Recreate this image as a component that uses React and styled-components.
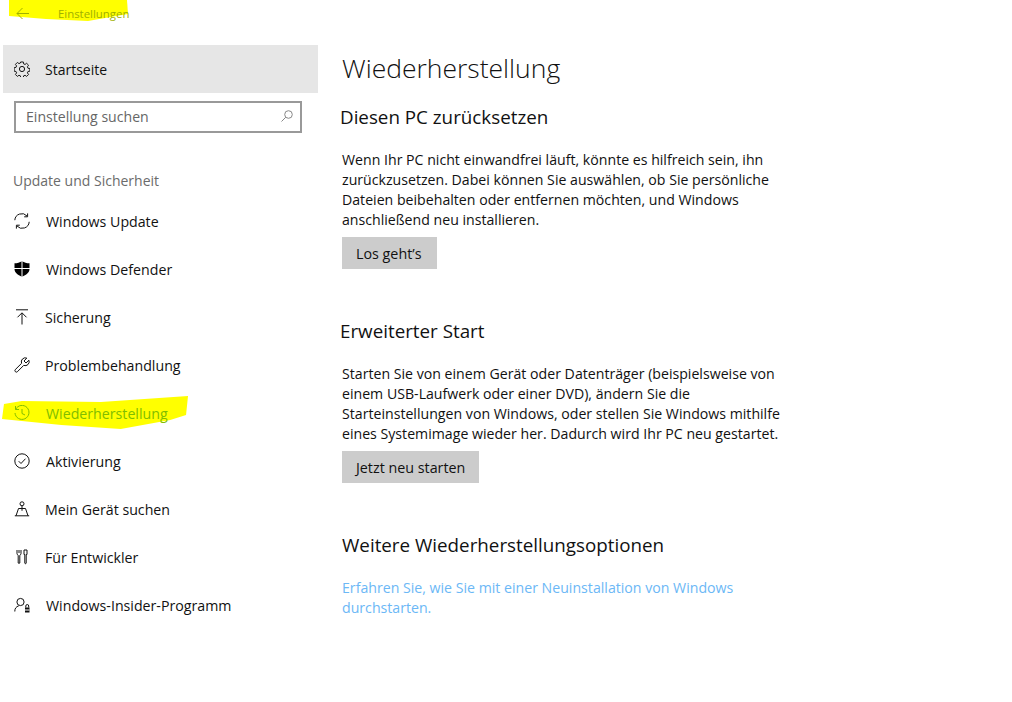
import React from "react";
import styled, { createGlobalStyle } from "styled-components";

const GlobalStyle = createGlobalStyle`
  html, body { margin: 0; padding: 0; background: #fff; }
  body { font-family: "Open Sans", "Noto Sans", "Liberation Sans", sans-serif; color: #000; }
`;

const Icon = ({ children, color }) => (
  <IconSvg viewBox="0 0 16 16" fill="none" stroke={color || "#111"} strokeWidth="1">
    {children}
  </IconSvg>
);

const GearIcon = () => (
  <Icon>
    <circle cx="8" cy="8" r="2.6" />
    <path d="M6.6.6h2.800l.3 2 1.500.6 1.700-1.200 2 2-1.200 1.700.6 1.500 2 .3v2.800l-2 .3-.6 1.500 1.200 1.700-2 2-1.700-1.200-1.500.6-.3 2H6.600l-.3-2-1.500-.6-1.700 1.200-2-2 1.200-1.700-.6-1.500-2-.3V6.600l2-.3.6-1.500L1.100 3.100l2-2 1.700 1.200 1.500-.6z" transform="translate(.4 .4) scale(.95)" />
  </Icon>
);

const UpdateIcon = () => (
  <Icon>
    <path d="M.8 7.200A7 7 0 0 1 13 3" />
    <path d="M13.600.4v3.400h-3.400" />
    <path d="M15.200 8.800A7 7 0 0 1 3 13" />
    <path d="M2.400 15.600v-3.400h3.400" />
  </Icon>
);

const ShieldIcon = () => (
  <IconSvg viewBox="0 0 16 16">
    <path fill="#000" d="M8 .2c2.200 1.300 4.700 2 7.500 2.100V8c0 3.500-3.200 6.100-7.500 7.800C3.700 14.100.5 11.500.5 8V2.300C3.300 2.200 5.800 1.500 8 .2z" />
    <path stroke="#fff" strokeWidth="1" d="M8 0v16M0 7.500h16" />
  </IconSvg>
);

const BackupIcon = () => (
  <Icon>
    <path d="M2 .8h12" />
    <path d="M8 15.500V4" />
    <path d="M3.500 8.300 8 3.800l4.500 4.500" />
  </Icon>
);

const WrenchIcon = () => (
  <Icon>
    <path d="M14.900 3.200 12 6 10 4l2.800-2.900A4 4 0 0 0 7.600 6.300L1.200 12.700a1.500 1.500 0 0 0 2.100 2.100l6.400-6.400a4 4 0 0 0 5.200-5.200z" />
  </Icon>
);

const HistoryIcon = ({ color }) => (
  <Icon color={color}>
    <path d="M1.700 4.300A7 7 0 1 1 1 8" />
    <path d="M1.500 1v3.500H5" />
    <path d="M8 4v4.500l3 1.500" />
  </Icon>
);

const CheckIcon = () => (
  <Icon>
    <circle cx="8" cy="8" r="7.200" />
    <path d="M4.700 8.200 7 10.500l4.500-4.800" />
  </Icon>
);

const FindIcon = () => (
  <Icon>
    <circle cx="8" cy="2.800" r="2" />
    <path d="M8 4.800v5" />
    <path d="M0.800 14.800h14.400M2 14.800 4.500 7.500h7l2.500 7.300" />
  </Icon>
);

const DevIcon = () => (
  <Icon>
    <path d="M3 1v3.500c0 1 .6 1.500 1.200 1.800V14a1 1 0 0 0 1.600 0V6.300C6.400 6 7 5.500 7 4.500V1" />
    <path d="M5 1v3" />
    <path d="M10 1h3v4.500h-.8V14a.7.7 0 0 1-1.400 0V5.500H10z" />
  </Icon>
);

const InsiderIcon = () => (
  <Icon>
    <circle cx="6.500" cy="5" r="3.600" />
    <path d="M.8 14.500a5.800 5.800 0 0 1 4-5.700" />
    <path fill="#111" stroke="none" d="M11 10.500h4.500V15.500H11z" />
    <path d="M11.800 10.500V9a1.400 1.400 0 0 1 2.900 0v1.500" />
    <path stroke="#fff" d="M11 13h4.500" />
  </Icon>
);

const NAV_ITEMS = [
  { label: "Windows Update", Glyph: UpdateIcon, offset: 1 },
  { label: "Windows Defender", Glyph: ShieldIcon, offset: 1 },
  { label: "Sicherung", Glyph: BackupIcon },
  { label: "Problembehandlung", Glyph: WrenchIcon },
  { label: "Wiederherstellung", Glyph: HistoryIcon, marked: true, offset: 1 },
  { label: "Aktivierung", Glyph: CheckIcon, offset: 1 },
  { label: "Mein Gerät suchen", Glyph: FindIcon },
  { label: "Für Entwickler", Glyph: DevIcon },
  { label: "Windows-Insider-Programm", Glyph: InsiderIcon, offset: 1 },
];

export default function App() {
  return (
    <Page>
      <GlobalStyle />
      <Sidebar>
        <TitleBar>
          <Marker viewBox="0 0 122 22" $left={3} $top={0} $width={122} $height={22}>
            <path fill="#ffff00" d="M3 0H121L122 14 82 21 40 19 3 16z" />
          </Marker>
          <BackLink>
            <IconSvg $size={13} viewBox="0 0 13 13" fill="none" stroke="#a0b000">
              <path d="M13 6.500H1M6.500 1 1 6.500 6.500 12" />
            </IconSvg>
          </BackLink>
          <AppName>Einstellungen</AppName>
        </TitleBar>
        <HomeRow>
          <GearIcon />
          <HomeLabel>Startseite</HomeLabel>
        </HomeRow>
        <SearchBox>
          <SearchText>Einstellung suchen</SearchText>
          <IconSvg $size={12} viewBox="0 0 12 12" fill="none" stroke="#888">
            <circle cx="7.500" cy="4.500" r="3.800" />
            <path d="M4.800 7.200 .5 11.500" />
          </IconSvg>
        </SearchBox>
        <GroupLabel>Update und Sicherheit</GroupLabel>
        <NavList>
          {NAV_ITEMS.map(({ label, Glyph, marked, offset }) => (
            <NavRow key={label}>
              {marked && (
                <Marker viewBox="0 0 190 33" $left={-1} $top={7} $width={188} $height={33}>
                  <path fill="#ffff00" d="M2 8 20 5 100 6 188 0 186 19 170 24 120 33 60 29 0 23z" />
                </Marker>
              )}
              <Glyph color={marked ? "#80bd00" : undefined} />
              <NavLabel $marked={marked} $offset={offset}>{label}</NavLabel>
            </NavRow>
          ))}
        </NavList>
      </Sidebar>
      <Main>
        <PageTitle>Wiederherstellung</PageTitle>
        <Section>
          <SectionTitle $shift={-2}>Diesen PC zurücksetzen</SectionTitle>
          <Body>
            Wenn Ihr PC nicht einwandfrei läuft, könnte es hilfreich sein, ihn<br />
            zurückzusetzen. Dabei können Sie auswählen, ob Sie persönliche<br />
            Dateien beibehalten oder entfernen möchten, und Windows<br />
            anschließend neu installieren.
          </Body>
          <ActionButton>Los geht’s</ActionButton>
        </Section>
        <Section>
          <SectionTitle $shift={-2}>Erweiterter Start</SectionTitle>
          <Body>
            Starten Sie von einem Gerät oder Datenträger (beispielsweise von<br />
            einem USB-Laufwerk oder einer DVD), ändern Sie die<br />
            Starteinstellungen von Windows, oder stellen Sie Windows mithilfe<br />
            eines Systemimage wieder her. Dadurch wird Ihr PC neu gestartet.
          </Body>
          <ActionButton>Jetzt neu starten</ActionButton>
        </Section>
        <Section>
          <SectionTitle>Weitere Wiederherstellungsoptionen</SectionTitle>
          <LinkText>
            Erfahren Sie, wie Sie mit einer Neuinstallation von Windows<br />
            durchstarten.
          </LinkText>
        </Section>
      </Main>
    </Page>
  );
}

const Page = styled.div`
  display: flex;
  width: 1012px;
  height: 702px;
  overflow: hidden;
  background: #fff;
`;

const Sidebar = styled.aside`
  width: 318px;
  padding-left: 3px;
  box-sizing: border-box;
  flex: none;
`;

const TitleBar = styled.div`
  position: relative;
  display: flex;
  align-items: center;
  height: 26px;
  margin-bottom: 19px;
`;

const Marker = styled.svg.attrs({ preserveAspectRatio: "none" })`
  position: absolute;
  left: ${(p) => p.$left}px;
  top: ${(p) => p.$top}px;
  width: ${(p) => p.$width}px;
  height: ${(p) => p.$height}px;
  z-index: 0;
`;

const IconSvg = styled.svg`
  position: relative;
  z-index: 1;
  width: ${(p) => p.$size || 16}px;
  height: ${(p) => p.$size || 16}px;
  flex: none;
`;

const BackLink = styled.div`
  position: relative;
  display: flex;
  width: 55px;
  padding-left: 13px;
  box-sizing: border-box;
`;

const AppName = styled.span`
  position: relative;
  font-size: 11.400px;
  color: #a0b000;
`;

const HomeRow = styled.div`
  display: flex;
  align-items: center;
  height: 48px;
  padding-left: 11px;
  background: #e6e6e6;
`;

const HomeLabel = styled.span`
  margin-left: 15px;
  font-size: 14px;
  color: #111;
`;

const SearchBox = styled.div`
  display: flex;
  align-items: center;
  justify-content: space-between;
  box-sizing: border-box;
  width: 288px;
  height: 32px;
  margin: 8px 0 0 11px;
  padding: 0 7px 2px 10px;
  border: 2px solid #999;
`;

const SearchText = styled.span`
  font-size: 14.100px;
  color: #666;
`;

const GroupLabel = styled.div`
  margin: 37px 0 0 10px;
  height: 22px;
  line-height: 22px;
  font-size: 14px;
  color: #6b6b6b;
`;

const NavList = styled.nav`
  display: flex;
  flex-direction: column;
  margin-top: 5px;
`;

const NavRow = styled.div`
  position: relative;
  display: flex;
  align-items: center;
  height: 48px;
  padding-left: 11px;
`;

const NavLabel = styled.span`
  position: relative;
  z-index: 1;
  margin-left: ${(p) => 15 + (p.$offset || 0)}px;
  font-size: 14.200px;
  color: ${(p) => (p.$marked ? "#80bd00" : "#111")};
`;

const Main = styled.main`
  flex: 1;
  padding: 49px 0 0 24px;
`;

const PageTitle = styled.h1`
  margin: 0;
  height: 40px;
  line-height: 38px;
  font-size: 26.500px;
  font-weight: 300;
  color: #111;
`;

const Section = styled.section`
  margin-bottom: 34px;
`;

const SectionTitle = styled.h2`
  margin: 0 0 0 ${(p) => p.$shift || 0}px;
  padding-top: 14px;
  height: 28px;
  line-height: 28px;
  font-size: 18.800px;
  font-weight: 400;
  color: #111;
`;

const Body = styled.p`
  margin: 19px 0 7px;
  font-size: 14.150px;
  line-height: 20px;
  color: #111;
`;

const ActionButton = styled.button`
  display: block;
  min-width: 95px;
  height: 32px;
  padding: 0 14px;
  border: 0;
  background: #ccc;
  font: inherit;
  font-size: 14.300px;
  text-align: left;
  color: #111;
`;

const LinkText = styled.a`
  display: block;
  margin-top: 19px;
  font-size: 14.150px;
  line-height: 20px;
  color: #6cb8f6;
`;
